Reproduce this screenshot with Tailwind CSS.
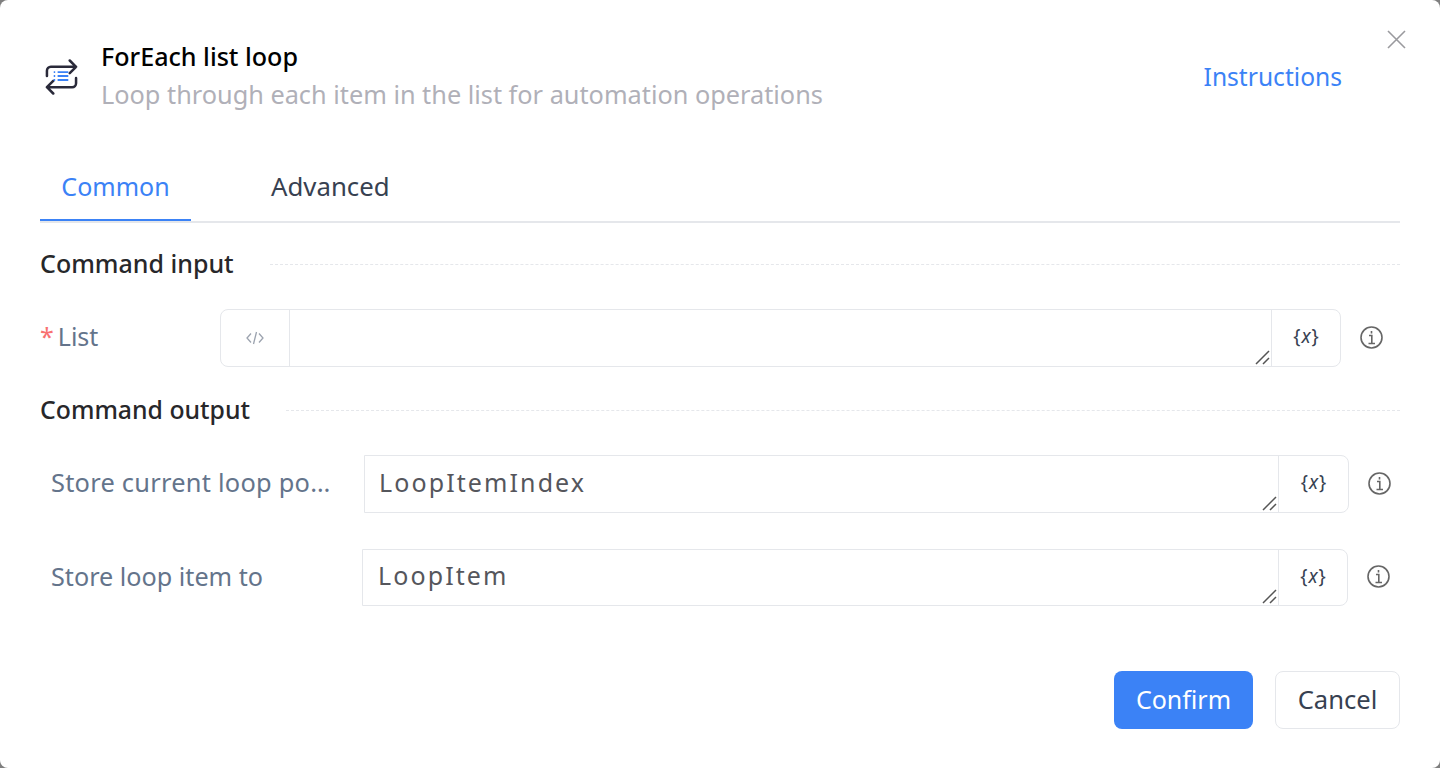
<!DOCTYPE html>
<html lang="en">
<head>
    <meta charset="UTF-8">
    <title>ForEach list loop</title>
    <script src="https://cdn.jsdelivr.net/npm/@tailwindcss/browser@4"></script>
</head>
<body class="h-screen overflow-hidden bg-[#7f7f7f] font-['Noto_Sans',sans-serif]">
    <div class="relative h-[768px] w-[1440px] rounded-[8px] bg-white px-[40px]">
        <!-- close -->
        <svg class="absolute right-[34px] top-[30px] h-[19px] w-[19px] text-[#9a9a9e]" viewBox="0 0 19 19" fill="none" stroke="currentColor" stroke-width="1.6">
            <path d="M1 1l17 17M18 1L1 18"></path>
        </svg>

        <!-- header -->
        <div class="flex h-[153px] items-start pt-[37px]">
            <svg class="mt-[22px] ml-[5px] h-[36px] w-[33px]" viewBox="0 0 34 36" fill="none" stroke-linecap="round" stroke-linejoin="round">
                <path d="M2 17v-5.500a4 4 0 0 1 4-4h26M25.500 1l6.500 6.500-6.500 6.500" stroke="#2a2a3a" stroke-width="2.600"></path>
                <path d="M32 19v5.500a4 4 0 0 1-4 4H2M8.500 22L2 28.500 8.500 35" stroke="#2a2a3a" stroke-width="2.600"></path>
                <path d="M13 13h11M13 17h11M13 21h11" stroke="#3b82f6" stroke-width="2" stroke-linecap="butt"></path>
                <path d="M9 13h1.500M9 17h1.500M9 21h1.500" stroke="#3b82f6" stroke-width="2" stroke-linecap="butt"></path>
            </svg>
            <div class="ml-[23px] flex-1">
                <div class="text-[25.100px] leading-[38px] font-medium text-black">ForEach list loop</div>
                <div class="text-[25.300px] leading-[38px] text-[#b0b0b8]">Loop through each item in the list for automation operations</div>
            </div>
            <a class="mt-[21px] mr-[58px] text-[24.600px] leading-[38px] text-[#3b82f6]">Instructions</a>
        </div>

        <!-- tabs -->
        <div class="flex h-[70px] border-b-2 border-[#e5e7eb]">
            <div class="w-[151px] border-b-2 border-[#3b82f6] pt-[14px] text-center text-[25px] leading-[38px] text-[#3b82f6]">Common</div>
            <div class="ml-[80px] pt-[14px] text-[25.800px] leading-[38px] text-[#374151]">Advanced</div>
        </div>

        <!-- command input -->
        <div class="mt-[21px] flex h-[40px] items-center">
            <span class="text-[25px] font-medium text-[#27272a]">Command input</span>
            <div class="ml-[36px] flex-1 border-t border-dashed border-[#e5e7eb]"></div>
        </div>
        <div class="mt-[25px] flex h-[58px] items-center">
            <div class="-mt-[3px] flex w-[180px] text-[25px] text-[#64748b]"><span class="text-[#f87171]">*</span><span class="ml-[4px]">List</span></div>
            <div class="flex h-[58px] w-[1121px] rounded-[8px] border border-[#e5e7eb]">
                <div class="flex w-[69px] items-center justify-center border-r border-[#e5e7eb]">
                    <svg class="h-[14px] w-[18px] text-[#9ca3af]" viewBox="0 0 18 14" fill="none" stroke="currentColor" stroke-width="1.300"><path d="M5 2.500L1 7l4 4.500M13 2.500L17 7l-4 4.500M10.500 1l-3 12"></path></svg>
                </div>
                <div class="relative flex-1">
                    <svg class="absolute right-[1px] bottom-[1px] h-[15px] w-[15px] text-[#555]" viewBox="0 0 15 15" fill="none" stroke="currentColor" stroke-width="1.500"><path d="M1 14L14 1M8 14l6-6"></path></svg>
                </div>
                <div class="flex w-[69px] items-center justify-center border-l border-[#e5e7eb] pb-[3px] text-[19px] text-[#374151]">{<i class="px-[1px]">x</i>}</div>
            </div>
            <svg class="-mt-[2px] ml-[19px] h-[23px] w-[23px] text-[#666]" viewBox="0 0 23 23" fill="none" stroke="currentColor" stroke-width="1.600"><circle cx="11.500" cy="11.500" r="10.500"></circle><path d="M9 9.500h2.800v8M8.500 17.500h6.500M11.500 5v2.500"></path></svg>
        </div>

        <!-- command output -->
        <div class="mt-[23px] flex h-[40px] items-center">
            <span class="text-[24.800px] font-medium text-[#27272a]">Command output</span>
            <div class="ml-[36px] flex-1 border-t border-dashed border-[#e5e7eb]"></div>
        </div>
        <div class="mt-[25px] flex h-[58px] items-center pl-[11px]">
            <div class="-mt-[3px] w-[280px] truncate text-[25.400px] tracking-[0.250px] text-[#64748b]">Store current loop position to</div>
            <div class="ml-[33px] flex h-[58px] w-[985px] rounded-r-[8px] border border-[#e5e7eb]">
                <div class="relative flex-1 pl-[14px] text-[25px] leading-[52px] tracking-[2.100px] text-[#55565c]">LoopItemIndex
                    <svg class="absolute right-[1px] bottom-[1px] h-[15px] w-[15px] text-[#555]" viewBox="0 0 15 15" fill="none" stroke="currentColor" stroke-width="1.500"><path d="M1 14L14 1M8 14l6-6"></path></svg>
                </div>
                <div class="flex w-[70px] items-center justify-center border-l border-[#e5e7eb] pb-[3px] text-[19px] text-[#374151]">{<i class="px-[1px]">x</i>}</div>
            </div>
            <svg class="-mt-[2px] ml-[19px] h-[23px] w-[23px] text-[#666]" viewBox="0 0 23 23" fill="none" stroke="currentColor" stroke-width="1.600"><circle cx="11.500" cy="11.500" r="10.500"></circle><path d="M9 9.500h2.800v8M8.500 17.500h6.500M11.500 5v2.500"></path></svg>
        </div>
        <div class="mt-[36px] flex h-[57px] items-center pl-[11px]">
            <div class="-mt-[1px] w-[279px] truncate text-[25.200px] text-[#64748b]">Store loop item to</div>
            <div class="ml-[32px] flex h-[57px] w-[986px] rounded-r-[8px] border border-[#e5e7eb]">
                <div class="relative flex-1 pl-[15px] text-[25px] leading-[50px] tracking-[2.100px] text-[#55565c]">LoopItem
                    <svg class="absolute right-[1px] bottom-[1px] h-[15px] w-[15px] text-[#555]" viewBox="0 0 15 15" fill="none" stroke="currentColor" stroke-width="1.500"><path d="M1 14L14 1M8 14l6-6"></path></svg>
                </div>
                <div class="flex w-[69px] items-center justify-center border-l border-[#e5e7eb] pb-[3px] text-[19px] text-[#374151]">{<i class="px-[1px]">x</i>}</div>
            </div>
            <svg class="-mt-[2px] ml-[19px] h-[23px] w-[23px] text-[#666]" viewBox="0 0 23 23" fill="none" stroke="currentColor" stroke-width="1.600"><circle cx="11.500" cy="11.500" r="10.500"></circle><path d="M9 9.500h2.800v8M8.500 17.500h6.500M11.500 5v2.500"></path></svg>
        </div>

        <!-- footer -->
        <div class="mt-[65px] flex justify-end gap-[22px]">
            <button class="h-[58px] w-[139px] rounded-[8px] bg-[#3b82f6] pb-[1px] text-[25px] text-white">Confirm</button>
            <button class="h-[58px] w-[125px] rounded-[8px] border border-[#e5e7eb] text-[25.600px] text-[#374151]">Cancel</button>
        </div>
    </div>
</body>
</html>
